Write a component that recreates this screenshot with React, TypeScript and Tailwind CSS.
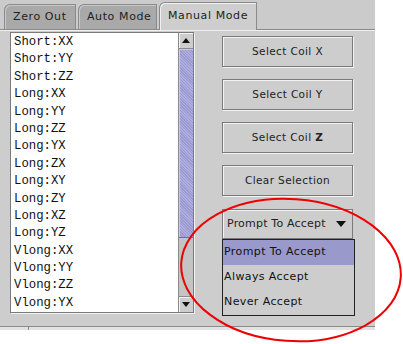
import { ReactNode } from "react";

const items = [
  "Short:XX",
  "Short:YY",
  "Short:ZZ",
  "Long:XX",
  "Long:YY",
  "Long:ZZ",
  "Long:YX",
  "Long:ZX",
  "Long:XY",
  "Long:ZY",
  "Long:XZ",
  "Long:YZ",
  "Vlong:XX",
  "Vlong:YY",
  "Vlong:ZZ",
  "Vlong:YX",
];

const tabs = [
  { label: "Zero Out", width: "w-[72px]", active: false },
  { label: "Auto Mode", width: "w-[79px]", active: false },
  { label: "Manual Mode", width: "w-[98px]", active: true },
];

function Tab({ label, width, active }: { label: string; width: string; active: boolean }) {
  return (
    <div
      className={`${width} flex items-center pl-[8px] border-t border-l border-r border-[#8a8a8a] rounded-tl-[6px] mr-[2px] ${
        active
          ? "h-[28px] bg-[#cecece] border-b-0 shadow-[inset_1px_1px_0_#f0f0f0] relative top-[1px]"
          : "h-[25px] bg-[#a9a9a9] shadow-[inset_1px_1px_0_#c8c8c8]"
      }`}
    >
      <span className="text-[11px] tracking-[0.6px] text-[#222]">{label}</span>
    </div>
  );
}

function CoilButton({ children }: { children: ReactNode }) {
  return (
    <button className="w-[131px] h-[31px] border border-[#7a7a7a] shadow-[inset_1px_1px_0_#f2f2f2,1px_1px_0_#f2f2f2] bg-[#cdcdcd] text-[10.5px] tracking-[0.4px] text-[#222]">
      {children}
    </button>
  );
}

function Arrow({ up }: { up?: boolean }) {
  return (
    <svg width="8" height="5" viewBox="0 0 8 5">
      <path d={up ? "M0 5 L4 0 L8 5 Z" : "M0 0 L4 5 L8 0 Z"} fill="#111" />
    </svg>
  );
}

export default function App() {
  return (
    <div
      className="relative w-[403px] h-[344px] bg-white overflow-hidden"
      style={{ fontFamily: '"DejaVu Sans", "Liberation Sans", sans-serif' }}
    >
      <div className="w-[375px] h-[330px] bg-[#cdcdcd] flex flex-col">
        {/* tab strip */}
        <div className="h-[30px] flex items-end pl-[4px] bg-[#cbcbcb] border-b border-[#8a8a8a] shadow-[0_1px_0_#f0f0f0]">
          {tabs.map((t) => (
            <Tab key={t.label} {...t} />
          ))}
        </div>

        <div className="flex flex-1 pt-[2px]">
          {/* list + scrollbar */}
          <div className="ml-[10px] w-[184px] h-[281px] flex border border-[#7a7a7a] shadow-[1px_1px_0_#f2f2f2]">
            <div className="flex-1 bg-white pt-[1px] pl-[3px] overflow-hidden">
              {items.map((it) => (
                <div
                  key={it}
                  className="h-[17.4px] leading-[17.4px] text-[12.3px] text-[#111]"
                  style={{ fontFamily: '"Liberation Mono", "Courier New", monospace' }}
                >
                  {it}
                </div>
              ))}
            </div>
            <div className="w-[15px] flex flex-col bg-[#c4c4c4] border-l border-[#8a8a8a]">
              <div className="h-[16px] flex items-center justify-center border-b border-[#8a8a8a] bg-[#cdcdcd] shadow-[inset_1px_1px_0_#f2f2f2]">
                <Arrow up />
              </div>
              <div className="h-[189px] bg-[#9c9cd2] border-b border-[#6f6fa8] shadow-[inset_1px_1px_0_#c8c8ee] bg-[repeating-linear-gradient(45deg,#9a9ad0_0px,#9a9ad0_1px,#aeaee0_1px,#aeaee0_2px)]" />
              <div className="flex-1" />
              <div className="h-[16px] flex items-center justify-center border-t border-[#8a8a8a] bg-[#cdcdcd] shadow-[inset_1px_1px_0_#f2f2f2]">
                <Arrow />
              </div>
            </div>
          </div>

          {/* buttons column */}
          <div className="ml-[28px] pt-[4px] flex flex-col gap-[12px]">
            <CoilButton>Select Coil X</CoilButton>
            <CoilButton>Select Coil Y</CoilButton>
            <CoilButton>
              Select Coil <b className="font-bold">Z</b>
            </CoilButton>
            <CoilButton>Clear Selection</CoilButton>

            <div className="relative mt-[1px]">
              <div className="w-[131px] h-[30px] flex items-center justify-between pl-[4px] pr-[6px] border border-[#7a7a7a] shadow-[inset_1px_1px_0_#f2f2f2] bg-[#cdcdcd]">
                <span className="text-[11px] tracking-[0.2px] text-[#222]">Prompt To Accept</span>
                <svg width="10" height="6" viewBox="0 0 10 6">
                  <path d="M0 0 L5 6 L10 0 Z" fill="#111" />
                </svg>
              </div>
              <div className="absolute left-0 top-[30px] w-[133px] bg-[#cdcdcd] border border-[#222] flex flex-col">
                <div className="h-[25px] flex items-center pl-[1px] bg-[#9999cc] text-[11px] tracking-[0.4px] text-[#111]">
                  Prompt To Accept
                </div>
                <div className="h-[25px] flex items-center pl-[1px] text-[11px] tracking-[0.4px] text-[#111]">
                  Always Accept
                </div>
                <div className="h-[25px] flex items-center pl-[1px] text-[11px] tracking-[0.4px] text-[#111]">
                  Never Accept
                </div>
              </div>
            </div>
          </div>
        </div>

        {/* bottom status strip */}
        <div className="h-[14px] border-b border-[#8a8a8a]" />
        <div className="h-[3px] flex bg-[#e2e2e2]">
          <div className="w-[29px] border-r border-[#8a8a8a]" />
        </div>
      </div>

      {/* red annotation ellipse */}
      <svg className="absolute left-0 top-0 pointer-events-none" width="403" height="344">
        <ellipse cx="291" cy="270" rx="110" ry="71" fill="none" stroke="#ee0000" strokeWidth="2" transform="rotate(4 291 270)" />
      </svg>
    </div>
  );
}
